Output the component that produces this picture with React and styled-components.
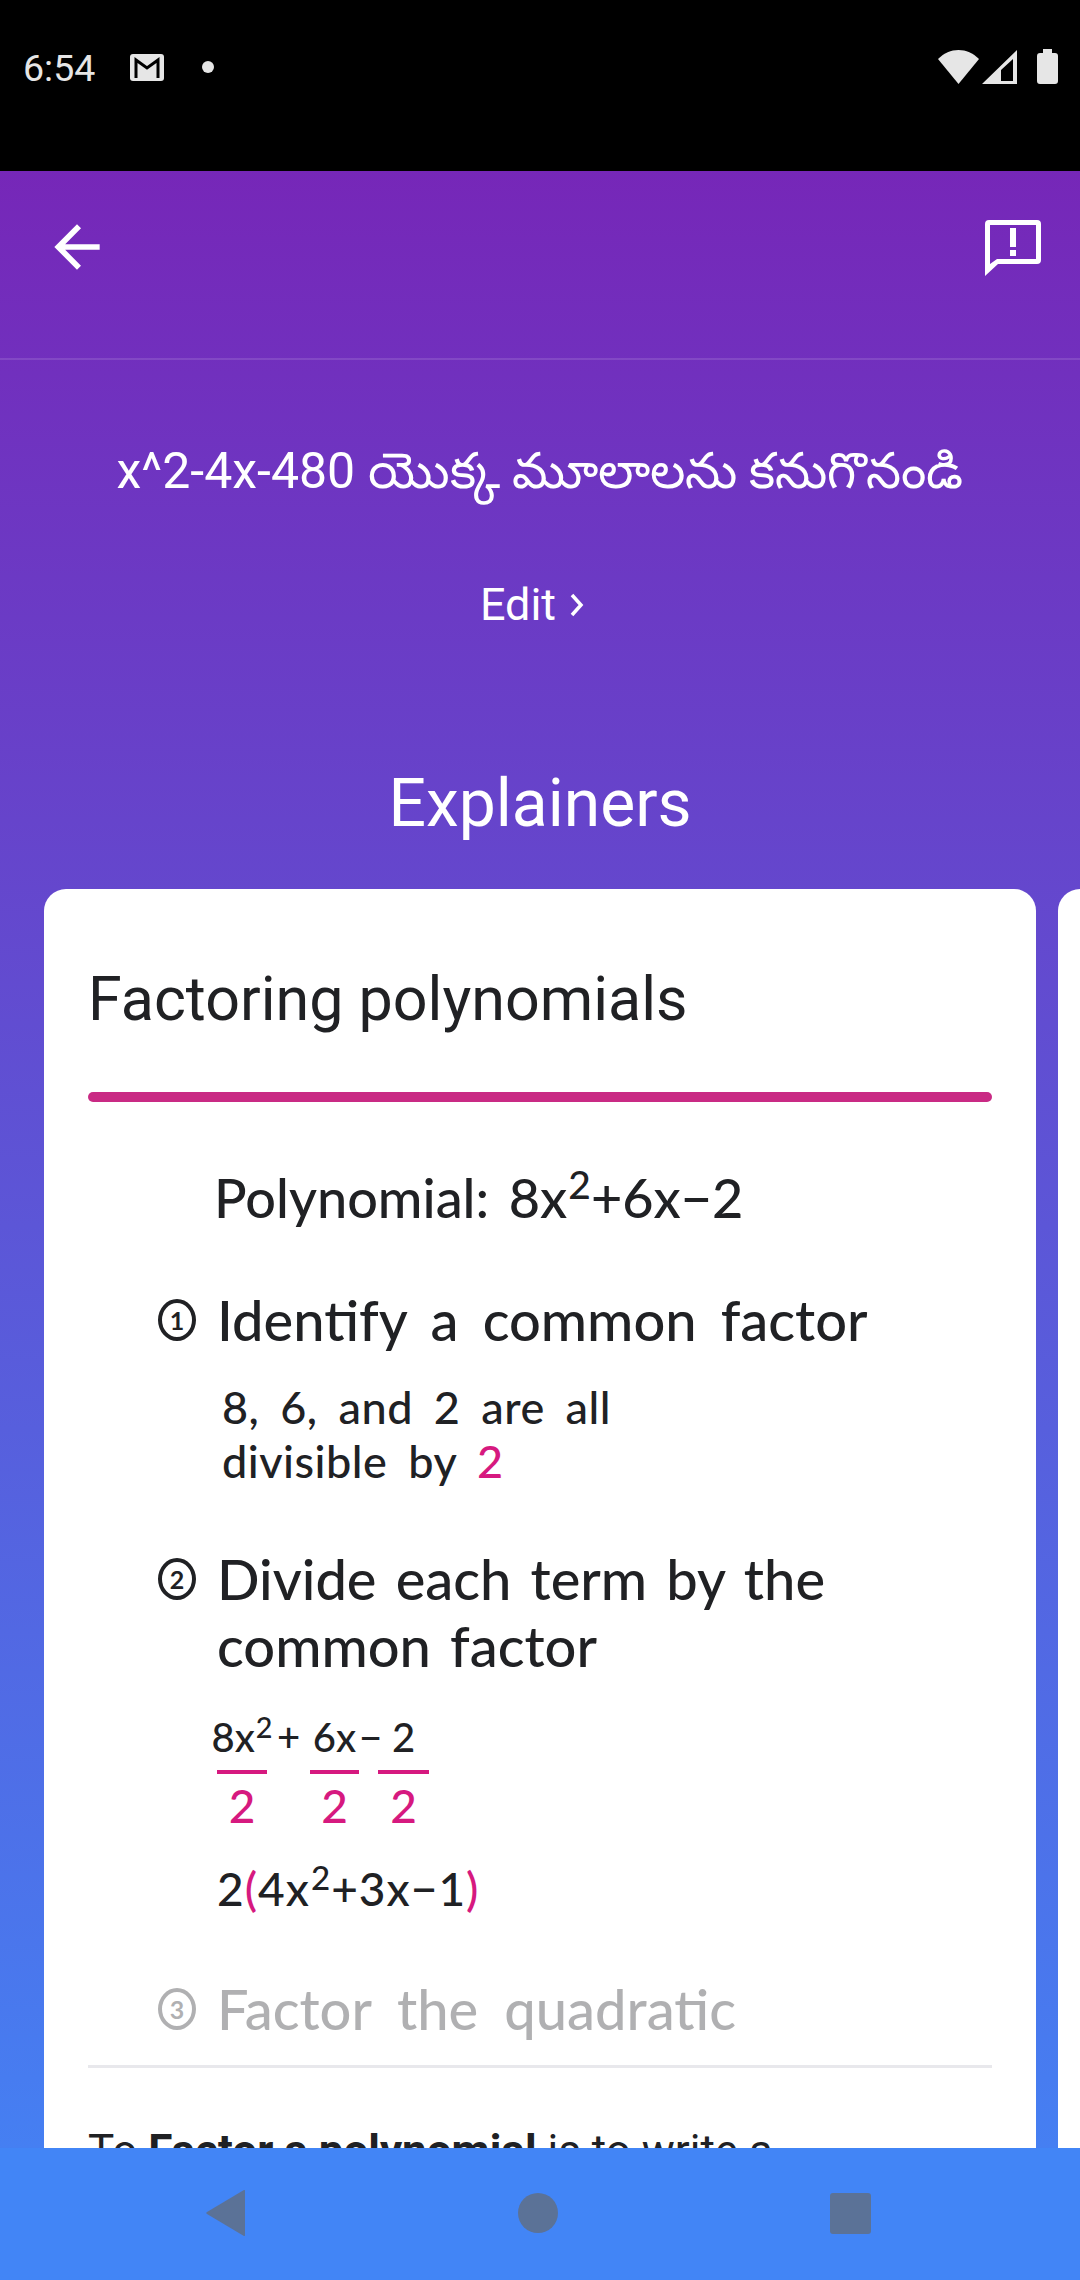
import * as React from "react"
import styled, { createGlobalStyle } from "styled-components"

const GlobalStyle = createGlobalStyle`
  html, body {
    margin: 0;
    padding: 0;
    background: #000;
  }
  * {
    box-sizing: border-box;
  }
`

const Screen = styled.div`
  width: 1080px;
  height: 2280px;
  display: flex;
  flex-direction: column;
  overflow: hidden;
  font-family: Roboto, "Noto Sans", sans-serif;
`

const StatusBar = styled.div`
  height: 171px;
  flex: none;
  background: #000;
  color: #e6e6e6;
  display: flex;
  align-items: flex-start;
  padding: 48px 22px 0 23px;
`

const Time = styled.span`
  font-size: 37.5px;
  line-height: 40px;
  margin-right: 35px;
`

const StatusIcons = styled.div`
  margin: 1px 0 0 auto;
  height: 35px;
  display: flex;
  align-items: flex-end;
  gap: 3px;
`

const Main = styled.main`
  flex: 1;
  min-height: 0;
  overflow: hidden;
  display: flex;
  flex-direction: column;
  align-items: center;
  background: linear-gradient(180deg, #7627b8 0%, #4285f6 100%) top / 100% 2109px no-repeat;
`

const TopBar = styled.header`
  width: 100%;
  height: 189px;
  flex: none;
  display: flex;
  align-items: flex-start;
  justify-content: space-between;
  padding: 42px 39px 0 43px;
  border-bottom: 2px solid rgba(255, 255, 255, 0.12);
`

const Question = styled.h1`
  margin: 76px 0 0;
  font-size: 50px;
  line-height: 70px;
  font-weight: 400;
  color: #fff;
  font-family: Roboto, "Noto Sans", "DejaVu Sans", sans-serif;
  white-space: nowrap;
`

const EditLink = styled.a`
  margin: 72px 0 0;
  padding-right: 16px;
  font-size: 45px;
  line-height: 54px;
  color: #fff;
  display: flex;
  align-items: center;
  gap: 14px;
`

const Heading = styled.h2`
  margin: 132px 0 0;
  font-size: 66px;
  line-height: 80px;
  font-weight: 400;
  color: #fff;
`

const Cards = styled.div`
  width: 100%;
  flex: 1;
  min-height: 0;
  margin-top: 45px;
  padding-left: 44px;
  display: flex;
  gap: 22px;
`

const Card = styled.article`
  flex: none;
  width: 992px;
  height: 1400px;
  padding: 0 44px;
  background: #fff;
  border-radius: 22px 22px 0 0;
  color: #202124;
`

const CardTitle = styled.h3`
  margin: 70px 0 0;
  font-size: 61px;
  line-height: 80px;
  font-weight: 400;
`

const AccentBar = styled.div`
  height: 10px;
  margin-top: 53px;
  border-radius: 5px;
  background: #c92a84;
`

const Sketch = styled.div`
  height: 963px;
  padding: 0 0 0 70px;
  display: flex;
  flex-direction: column;
  align-items: flex-start;
  font-family: Lato, "Open Sans", sans-serif;
  font-weight: 500;
`

const Formula = styled.div`
  margin: 61px 0 0 56px;
  font-size: 54px;
  line-height: 70px;
  word-spacing: 6px;
  white-space: nowrap;
`

const Step = styled.div`
  display: flex;
  align-items: flex-start;
  gap: 21px;
  margin-top: ${(p) => p.$top}px;
  opacity: ${(p) => (p.$faded ? 0.35 : 1)};
`

const StepBadge = styled.span`
  flex: none;
  width: 38px;
  height: 42px;
  margin-top: 13px;
  border: 4px solid #202124;
  border-radius: 50%;
  display: flex;
  align-items: center;
  justify-content: center;
  font-size: 25px;
  font-weight: 700;
  line-height: 1;
`

const StepText = styled.div`
  font-size: 56px;
  line-height: 67px;
  word-spacing: ${(p) => p.$words}px;
  white-space: nowrap;
`

const Note = styled.div`
  margin: 27px 0 0 64px;
  font-size: 45px;
  line-height: 54px;
  letter-spacing: 0.5px;
  word-spacing: 9px;
  white-space: nowrap;
`

const Pink = styled.span`
  color: #d6197f;
`

const Sup = styled.sup`
  font-size: 0.72em;
  line-height: 0;
  margin-left: 1px;
`

const Fractions = styled.div`
  margin: 25px 0 0 59px;
  display: flex;
  align-items: flex-start;
  font-size: 46px;
`

const Fraction = styled.div`
  width: ${(p) => p.$width}px;
  display: flex;
  flex-direction: column;
  align-items: center;
`

const Numerator = styled.div`
  height: 66px;
  line-height: 66px;
  font-size: 40px;
  white-space: nowrap;
`

const FractionBar = styled.div`
  width: 100%;
  height: 4px;
  background: #d6197f;
`

const Denominator = styled(Pink)`
  line-height: 64px;
`

const Operator = styled.span`
  width: ${(p) => p.$width}px;
  height: 66px;
  line-height: 66px;
  font-size: 40px;
  text-align: center;
`

const Factored = styled.div`
  margin: 16px 0 0 59px;
  font-size: 46px;
  line-height: 70px;
  letter-spacing: 1px;
  white-space: nowrap;
`

const Divider = styled.div`
  height: 3px;
  background: #e8e8ec;
`

const Body = styled.p`
  margin: 53px 0 0;
  font-size: 44px;
  line-height: 60px;
  color: #202124;
`

const PeekCard = styled.div`
  flex: none;
  width: 100px;
  height: 1400px;
  background: #fff;
  border-radius: 22px 0 0 0;
`

const NavBar = styled.nav`
  height: 132px;
  flex: none;
  background: #4285f6;
  display: flex;
  align-items: center;
  padding: 0 209px 2px 206px;
  justify-content: space-between;
`

const NavIcon = styled.svg`
  display: block;
  fill: #5b7297;
`

const Icon = styled.svg`
  display: block;
  fill: ${(p) => p.$fill || "#e6e6e6"};
`

const GmailGlyph = styled(Icon)`
  margin-top: 6px;
`

const FeedbackGlyph = styled(Icon)`
  margin-top: 7px;
`

const BatteryGlyph = styled(Icon)`
  margin-left: 17px;
`

const NotificationDot = styled.span`
  width: 12px;
  height: 12px;
  margin: 13px 0 0 38px;
  border-radius: 50%;
  background: #e6e6e6;
`

const GmailIcon = () => (
  <GmailGlyph width="34" height="27" viewBox="0 0 34 27">
    <rect width="34" height="27" rx="3" />
    <path d="M6 24V6l11 8 11-8v18" fill="none" stroke="#000" strokeWidth="3" />
  </GmailGlyph>
)

const BackIcon = () => (
  <Icon $fill="#fff" width="68" height="68" viewBox="0 0 24 24">
    <path d="M20 11H7.83l5.59-5.59L12 4l-8 8 8 8 1.41-1.41L7.83 13H20v-2z" />
  </Icon>
)

const FeedbackIcon = () => (
  <FeedbackGlyph $fill="#fff" width="56" height="56" viewBox="0 0 56 56">
    <path
      fillRule="evenodd"
      d="M4 0h48a4 4 0 0 1 4 4v36a4 4 0 0 1-4 4H13L0 56V4a4 4 0 0 1 4-4zm1 5v39l7-5h39V5H5zm20 3h6v19h-6V8zm0 22h6v6h-6v-6z"
    />
  </FeedbackGlyph>
)

const App = () => (
  <Screen>
    <GlobalStyle />
    <StatusBar>
      <Time>6:54</Time>
      <GmailIcon />
      <NotificationDot />
      <StatusIcons>
        <Icon width="41" height="34" viewBox="0 0 41 34">
          <path d="M20.5 34L0 9C6 3 13 0 20.5 0S35 3 41 9z" />
        </Icon>
        <Icon width="35" height="34" viewBox="0 0 35 34">
          <path fillRule="evenodd" d="M35 0v34H0zM31 9L19 20v11h12z" />
        </Icon>
        <BatteryGlyph width="21" height="35" viewBox="0 0 21 35">
          <path d="M6 0h9v4h3a3 3 0 0 1 3 3v25a3 3 0 0 1-3 3H3a3 3 0 0 1-3-3V7a3 3 0 0 1 3-3h3z" />
        </BatteryGlyph>
      </StatusIcons>
    </StatusBar>

    <Main>
      <TopBar>
        <BackIcon />
        <FeedbackIcon />
      </TopBar>

      <Question>x^2-4x-480 యొక్క మూలాలను కనుగొనండి</Question>

      <EditLink>
        Edit
        <svg width="14" height="24" viewBox="0 0 14 24" fill="none" stroke="#fff" strokeWidth="3.5">
          <path d="M2 2l9 10-9 10" />
        </svg>
      </EditLink>

      <Heading>Explainers</Heading>

      <Cards>
        <Card>
          <CardTitle>Factoring polynomials</CardTitle>
          <AccentBar />

          <Sketch>
            <Formula>
              Polynomial: 8x<Sup>2</Sup>+6x−2
            </Formula>

            <Step $top={53}>
              <StepBadge>1</StepBadge>
              <StepText $words={10}>Identify a common factor</StepText>
            </Step>
            <Note>
              8, 6, and 2 are all
              <br />
              divisible by <Pink>2</Pink>
            </Note>

            <Step $top={57}>
              <StepBadge>2</StepBadge>
              <StepText $words={5}>
                Divide each term by the
                <br />
                common factor
              </StepText>
            </Step>

            <Fractions>
              <Fraction $width={50}>
                <Numerator>
                  8x<Sup>2</Sup>
                </Numerator>
                <FractionBar />
                <Denominator>2</Denominator>
              </Fraction>
              <Operator $width={43}>+</Operator>
              <Fraction $width={49}>
                <Numerator>6x</Numerator>
                <FractionBar />
                <Denominator>2</Denominator>
              </Fraction>
              <Operator $width={19}>−</Operator>
              <Fraction $width={51}>
                <Numerator>2</Numerator>
                <FractionBar />
                <Denominator>2</Denominator>
              </Fraction>
            </Fractions>

            <Factored>
              2<Pink>(</Pink>4x<Sup>2</Sup>+3x−1<Pink>)</Pink>
            </Factored>

            <Step $top={51} $faded>
              <StepBadge>3</StepBadge>
              <StepText $words={12}>Factor the quadratic</StepText>
            </Step>
          </Sketch>

          <Divider />
          <Body>
            To <b>Factor a polynomial</b> is to write a
          </Body>
        </Card>
        <PeekCard />
      </Cards>
    </Main>

    <NavBar>
      <NavIcon width="40" height="46" viewBox="0 0 40 46">
        <path d="M39 1v44a1 1 0 0 1-1.5.8L1 24a1.2 1.2 0 0 1 0-2L37.5.2A1 1 0 0 1 39 1z" />
      </NavIcon>
      <NavIcon width="40" height="40" viewBox="0 0 40 40">
        <circle cx="20" cy="20" r="20" />
      </NavIcon>
      <NavIcon width="41" height="41" viewBox="0 0 41 41">
        <rect width="41" height="41" rx="3" />
      </NavIcon>
    </NavBar>
  </Screen>
)

export default App
